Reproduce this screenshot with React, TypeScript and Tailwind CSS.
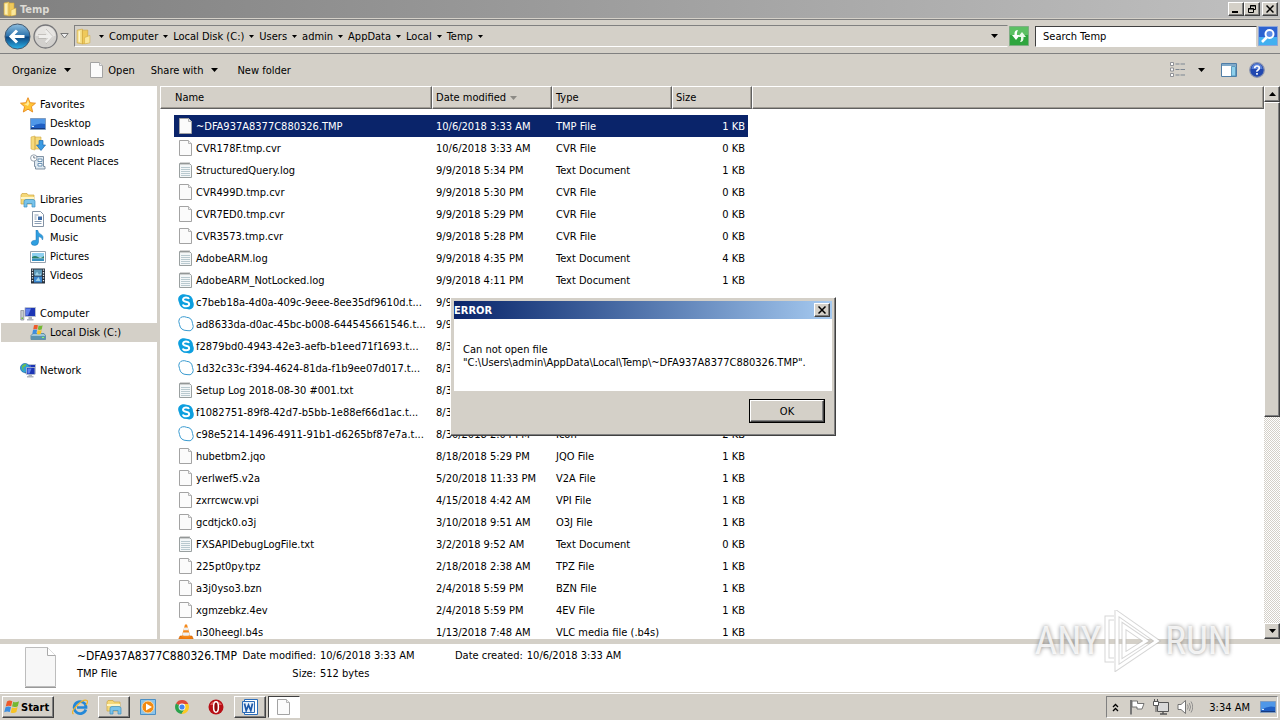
import type { ReactNode } from 'react';

const RAISED =
  'border border-t-white border-l-white border-r-[#404040] border-b-[#404040] bg-[#d4d0c8] shadow-[inset_-1px_-1px_#808080]';

type FileKind = 'blank' | 'text' | 'skype' | 'bubble' | 'vlc';

const files: { name: string; date: string; type?: string; size?: string; kind: FileKind }[] = [
  { name: '~DFA937A8377C880326.TMP', date: '10/6/2018 3:33 AM', type: 'TMP File', size: '1 KB', kind: 'blank' },
  { name: 'CVR178F.tmp.cvr', date: '10/6/2018 3:33 AM', type: 'CVR File', size: '0 KB', kind: 'blank' },
  { name: 'StructuredQuery.log', date: '9/9/2018 5:34 PM', type: 'Text Document', size: '1 KB', kind: 'text' },
  { name: 'CVR499D.tmp.cvr', date: '9/9/2018 5:30 PM', type: 'CVR File', size: '0 KB', kind: 'blank' },
  { name: 'CVR7ED0.tmp.cvr', date: '9/9/2018 5:29 PM', type: 'CVR File', size: '0 KB', kind: 'blank' },
  { name: 'CVR3573.tmp.cvr', date: '9/9/2018 5:28 PM', type: 'CVR File', size: '0 KB', kind: 'blank' },
  { name: 'AdobeARM.log', date: '9/9/2018 4:35 PM', type: 'Text Document', size: '4 KB', kind: 'text' },
  { name: 'AdobeARM_NotLocked.log', date: '9/9/2018 4:11 PM', type: 'Text Document', size: '1 KB', kind: 'text' },
  { name: 'c7beb18a-4d0a-409c-9eee-8ee35df9610d.t...', date: '9/9', kind: 'skype' },
  { name: 'ad8633da-d0ac-45bc-b008-644545661546.t...', date: '9/9', kind: 'bubble' },
  { name: 'f2879bd0-4943-42e3-aefb-b1eed71f1693.t...', date: '8/30', kind: 'skype' },
  { name: '1d32c33c-f394-4624-81da-f1b9ee07d017.t...', date: '8/30', kind: 'bubble' },
  { name: 'Setup Log 2018-08-30 #001.txt', date: '8/30', kind: 'text' },
  { name: 'f1082751-89f8-42d7-b5bb-1e88ef66d1ac.t...', date: '8/30', kind: 'skype' },
  { name: 'c98e5214-1496-4911-91b1-d6265bf87e7a.t...', date: '8/30/2018 2:04 PM', type: 'Icon', size: '2 KB', kind: 'bubble' },
  { name: 'hubetbm2.jqo', date: '8/18/2018 5:29 PM', type: 'JQO File', size: '1 KB', kind: 'blank' },
  { name: 'yerlwef5.v2a', date: '5/20/2018 11:33 PM', type: 'V2A File', size: '1 KB', kind: 'blank' },
  { name: 'zxrrcwcw.vpi', date: '4/15/2018 4:42 AM', type: 'VPI File', size: '1 KB', kind: 'blank' },
  { name: 'gcdtjck0.o3j', date: '3/10/2018 9:51 AM', type: 'O3J File', size: '1 KB', kind: 'blank' },
  { name: 'FXSAPIDebugLogFile.txt', date: '3/2/2018 9:52 AM', type: 'Text Document', size: '0 KB', kind: 'text' },
  { name: '225pt0py.tpz', date: '2/18/2018 2:38 AM', type: 'TPZ File', size: '1 KB', kind: 'blank' },
  { name: 'a3j0yso3.bzn', date: '2/4/2018 5:59 PM', type: 'BZN File', size: '1 KB', kind: 'blank' },
  { name: 'xgmzebkz.4ev', date: '2/4/2018 5:59 PM', type: '4EV File', size: '1 KB', kind: 'blank' },
  { name: 'n30heegl.b4s', date: '1/13/2018 7:48 AM', type: 'VLC media file (.b4s)', size: '1 KB', kind: 'vlc' },
];

const crumbs = ['Computer', 'Local Disk (C:)', 'Users', 'admin', 'AppData', 'Local', 'Temp'];

function Icon({ size = 16, children }: { size?: number; children: ReactNode }) {
  return (
    <svg width={size} height={size} viewBox="0 0 16 16" className="shrink-0" aria-hidden="true">
      {children}
    </svg>
  );
}

function DownArrow() {
  return (
    <svg width="7" height="4" viewBox="0 0 7 4" className="shrink-0" aria-hidden="true">
      <path d="M0 0h7L3.5 4z" fill="#000" />
    </svg>
  );
}

function CrumbArrow() {
  return (
    <svg width="5" height="3" viewBox="0 0 5 3" className="shrink-0" aria-hidden="true">
      <path d="M0 0h5L2.500 3z" fill="#000" />
    </svg>
  );
}

function FolderIcon({ size = 16 }: { size?: number }) {
  return (
    <Icon size={size}>
      <path d="M2 2l5-1v14l-5-1z" fill="#f7e08a" stroke="#d0a63a" strokeWidth=".6" />
      <path d="M7 2h5v12l-5 1z" fill="#efc95a" stroke="#d0a63a" strokeWidth=".6" />
      <path d="M9 9l5-2v7l-5 1z" fill="#fbe79b" stroke="#d0a63a" strokeWidth=".5" />
      <path d="M4 3v10" stroke="#fffbe0" />
    </Icon>
  );
}

function PageIcon() {
  return (
    <Icon>
      <path d="M1.500 .5h9l3 3v12h-12z" fill="#fbfbfb" stroke="#a3a3a3" />
      <path d="M10.500 .5v3h3" fill="#eee" stroke="#b4b4b4" />
    </Icon>
  );
}

function LibraryIcon() {
  return (
    <Icon>
      <path d="M1 3l1-1.500h5L8 3h6v9H1z" fill="#f5d878" stroke="#cfa640" strokeWidth=".7" />
      <path d="M1 5h13v2H1z" fill="#fff5c4" />
      <path d="M4 15V9.500Q4 7.500 6 7.500h7q2 0 2 2V15h-3v-3.500H7V15z" fill="#79c3ea" stroke="#3c8fc4" strokeWidth=".7" />
    </Icon>
  );
}

function DesktopIcon() {
  return (
    <Icon>
      <path d="M.5 2.500h15v11H.5z" fill="#1f5fc4" stroke="#7f9cc0" />
      <path d="M1 3h14v5Q8 6 1 11z" fill="#4f97e8" />
      <path d="M1 12h14v1H1z" fill="#153a80" />
      <path d="M2 10h2v1H2z" fill="#d6e8ff" />
    </Icon>
  );
}

function FileIcon({ kind }: { kind: FileKind }) {
  if (kind === 'blank') return <PageIcon />;
  if (kind === 'text') {
    return (
      <Icon>
        <path d="M1.500 1.500h10l2 2v12h-12z" fill="#f4f7f8" stroke="#9aa0a0" />
        <path d="M3 5.500h9M3 7.500h9M3 9.500h9M3 11.500h9M3 13.500h9" stroke="#a9bcc4" strokeWidth=".8" />
        <path d="M3 0v3M5 0v3M7 0v3M9 0v3M11 0v3" stroke="#888" strokeWidth=".7" />
      </Icon>
    );
  }
  if (kind === 'skype') {
    return (
      <Icon>
        <path d="M4.500.3Q7-.2 8.500.8Q14.500 1 15 7.500Q16.600 10.500 15 13.500Q12.500 16.500 9 15.100Q2 15 1 8.500Q-.7 5 1 2.500Q2.500.5 4.500.3z" fill="#0d9fdf" />
        <path d="M11 5Q10.500 3.500 8 3.500T5 5.500Q5 7.200 8 7.700T11.200 10Q11.200 12.300 8.200 12.300T4.800 10.500" fill="none" stroke="#fff" strokeWidth="1.900" />
      </Icon>
    );
  }
  if (kind === 'bubble') {
    return (
      <Icon>
        <path d="M4.500.8Q7 .4 8.500 1.300Q14 1.500 14.500 7.500Q16 10.500 14.500 13Q12.500 15.700 9 14.600Q2.400 14.500 1.500 8.500Q0 5 1.500 2.800Q2.800 1 4.500.8z" fill="#fff" stroke="#3a9bd0" />
      </Icon>
    );
  }
  return (
    <Icon>
      <path d="M2 12h12l1.500 3.500H.5z" fill="#ef7a0c" stroke="#c35a04" strokeWidth=".5" />
      <path d="M7 .5h2L12.500 13q-4.500 1.500-9 0z" fill="#f58a1c" />
      <path d="M6.200 3.500h3.600l.8 2.800H5.400zM4.900 8.500h6.200l.8 2.700q-4 1-7.800 0z" fill="#eef0f2" />
    </Icon>
  );
}

function MonitorShape() {
  return (
    <>
      <path d="M5 1.500h10.500v9H5z" fill="#1c35b5" stroke="#b9c1cf" />
      <path d="M6 2.500h5L8 9.500H6z" fill="#5f80ee" />
      <path d="M8.500 11h3.500v2h1.500v1.500H7V13h1.500z" fill="#aeb4bd" />
    </>
  );
}

function WindowsFlag({ size = 16 }: { size?: number }) {
  return (
    <Icon size={size}>
      <path d="M3 2.500Q5.500.8 8.300 2.300L7.200 7.200Q4.500 6 1.700 7.500z" fill="#ee5a2a" />
      <path d="M9.200 2.700Q12 3.900 15 2.300L13.800 7.200Q11 8.700 8.100 7.600z" fill="#74b832" />
      <path d="M1.500 8.300Q4.300 6.900 7 8.100L5.800 13Q3 11.700.2 13.300z" fill="#3c8ee0" />
      <path d="M7.900 8.500Q10.700 9.600 13.600 8.100L12.400 13Q9.600 14.600 6.700 13.400z" fill="#f7c325" />
    </Icon>
  );
}

const places: { title: string; icon: ReactNode; items: { label: string; icon: ReactNode; active?: boolean }[] }[] = [
  {
    title: 'Favorites',
    icon: (
      <Icon>
        <path d="M8 .7l2.100 5 5.400.5-4.100 3.500 1.300 5.300L8 12.200 3.300 15l1.300-5.300L.5 6.200l5.400-.5z" fill="#ffc536" stroke="#e8891c" strokeWidth=".9" />
        <path d="M8 3l1.200 3.500L8 9 4 7l2.700-.5z" fill="#ffeb9c" />
      </Icon>
    ),
    items: [
      { label: 'Desktop', icon: <DesktopIcon /> },
      {
        label: 'Downloads',
        icon: (
          <Icon>
            <path d="M1 2l4-1v14l-4-1zM5 2h6v12H5z" fill="#f6da7c" stroke="#d2aa45" strokeWidth=".6" />
            <path d="M9 5.500h4V10h2.500L11 15.500 6.500 10H9z" fill="#3b9be4" stroke="#1d68ae" strokeWidth=".7" />
          </Icon>
        ),
      },
      {
        label: 'Recent Places',
        icon: (
          <Icon>
            <path d="M4.500 2.500h9v10H15v2.500H5.500V12.500h-1z" fill="#dfe9f1" stroke="#75889b" strokeWidth=".9" />
            <path d="M8 5h4v2.500H8zM8 9.500h4V12H8z" fill="#fff" stroke="#5f89ad" strokeWidth=".9" />
            <circle cx="3.800" cy="4" r="3.200" fill="#fff" stroke="#8b97a5" strokeWidth=".9" />
            <path d="M3.800 2v2h1.700" fill="none" stroke="#4c5d70" strokeWidth=".8" />
          </Icon>
        ),
      },
    ],
  },
  {
    title: 'Libraries',
    icon: <LibraryIcon />,
    items: [
      {
        label: 'Documents',
        icon: (
          <Icon>
            <path d="M2.500 .5h8l3 3v12h-11z" fill="#fff" stroke="#8493a5" />
            <path d="M4.500 4h4M4.500 6h2M4.500 8h2M4.500 10.500h7M4.500 12.500h7" stroke="#7d93ad" strokeWidth=".9" />
            <path d="M8 5.500h4V9H8z" fill="#3a6ba8" />
          </Icon>
        ),
      },
      {
        label: 'Music',
        icon: (
          <Icon>
            <path d="M7.500 0q.5 3 3.500 4.500T12.500 10q-.3-3-4-3.500V12q-.2 3.200-3.700 3.500Q1.300 15.500 1.200 13q.2-2.800 4.800-2.700V0z" fill="#2f9fe0" stroke="#1a72b4" strokeWidth=".5" />
          </Icon>
        ),
      },
      {
        label: 'Pictures',
        icon: (
          <Icon>
            <path d="M.5 2.500h15v11H.5z" fill="#fff" stroke="#96a2ae" />
            <path d="M2 4h12v4H2z" fill="#8ed0f0" />
            <path d="M2 8q3-2 6 0t6-1v2.500H2z" fill="#2a8068" />
            <path d="M2 9.500h12V12H2z" fill="#3690c0" />
          </Icon>
        ),
      },
      {
        label: 'Videos',
        icon: (
          <Icon>
            <path d="M1 .5h14v15H1z" fill="#26303c" />
            <path d="M4 1.500h8v6H4z" fill="#5d99b8" />
            <path d="M4 8.500h8v6H4z" fill="#3a86d0" />
            <path d="M5 7q2-5 3-2t3 0v2.500H5zM5.500 13l3-4 2 4z" fill="#9fd2e8" />
            <path d="M2.500 1.500v13M13.500 1.500v13" stroke="#e9eef2" strokeWidth="1.300" strokeDasharray="1.300 1.300" />
          </Icon>
        ),
      },
    ],
  },
  {
    title: 'Computer',
    icon: (
      <Icon>
        <MonitorShape />
        <path d="M.8 4.500h3V14h-3z" fill="#c6cbd0" stroke="#7d848c" strokeWidth=".7" />
        <path d="M1.500 11.500h1.500V13H1.500z" fill="#6cbb3c" />
      </Icon>
    ),
    items: [
      {
        label: 'Local Disk (C:)',
        active: true,
        icon: (
          <Icon>
            <path d="M1 10.500L3 8.500h11l1.500 2v4H1z" fill="#9fc5d8" stroke="#4f7f97" strokeWidth=".8" />
            <path d="M1 11h14.500v3.500H1z" fill="#5c93ae" />
            <path d="M12 12h2v1h-2z" fill="#8aff6a" />
            <path d="M4 .3Q6-.5 7.900.3L7.200 4.400Q5 3.600 3.200 4.400z" fill="#ee5a2a" />
            <path d="M8.600.5q2 .8 4-.2L11.700 4.500q-2 .9-3.900.1z" fill="#74b832" />
            <path d="M3 5q2-.9 4 0L6.300 9q-2-.9-4 0z" fill="#3c8ee0" />
            <path d="M7.700 5.200q2 .8 4-.2L10.800 9q-2 .9-3.900.1z" fill="#f7c325" />
          </Icon>
        ),
      },
    ],
  },
  {
    title: 'Network',
    icon: (
      <Icon>
        <MonitorShape />
        <circle cx="5" cy="5" r="4.600" fill="#2fa0d8" stroke="#19679c" strokeWidth=".6" />
        <path d="M2 3q2-2.500 4.500-2Q6 3.500 4 4T4.500 8Q1.500 7 2 3z" fill="#6cc04c" />
        <path d="M6.500 4.500H15v7H6.500z" fill="#1c35b5" stroke="#b9c1cf" strokeWidth=".8" />
        <path d="M7.500 5.500h4l-2 5h-2z" fill="#5f80ee" />
      </Icon>
    ),
    items: [],
  },
];

function TitleBar() {
  const caption = `flex h-[14px] w-4 items-center justify-center ${RAISED}`;
  return (
    <header className="flex h-[18px] shrink-0 items-center bg-linear-to-r from-[#808080] to-[#c0c0c0] px-[2px]">
      <FolderIcon />
      <h1 className="ml-[2px] flex-1 font-bold text-[#dcdad4]">Temp</h1>
      <button className={caption} aria-label="Minimize">
        <svg width="8" height="8" viewBox="0 0 8 8"><path d="M0 6h6v2H0z" /></svg>
      </button>
      <button className={caption} aria-label="Restore">
        <svg width="8" height="8" viewBox="0 0 8 8" fill="none" stroke="#000">
          <path d="M2.500 3V.5h5v4H6M2 1h6" />
          <path d="M.5 3.500h5v4h-5zM0 4h6" />
        </svg>
      </button>
      <button className={`ml-[2px] ${caption}`} aria-label="Close">
        <svg width="8" height="8" viewBox="0 0 8 8" stroke="#000" strokeWidth="1.500"><path d="M.5.5l7 7M7.500.5l-7 7" /></svg>
      </button>
    </header>
  );
}

function AddressBar() {
  return (
    <nav className="flex h-9 shrink-0 items-center border-b border-b-[#808080] bg-[#d4d0c8] px-[2px] pt-px shadow-[inset_0_1px_#d4d0c8,inset_0_2px_#808080,0_1px_#fff]" aria-label="Location">
      <button aria-label="Back" className="ml-[2px]">
        <svg width="27" height="27" viewBox="0 0 27 27">
          <defs>
            <linearGradient id="back" x1="0" y1="0" x2="0" y2="1">
              <stop offset="0" stopColor="#8fbfe0" />
              <stop offset=".48" stopColor="#2c72ac" />
              <stop offset=".52" stopColor="#0d4580" />
              <stop offset="1" stopColor="#2db4ea" />
            </linearGradient>
          </defs>
          <circle cx="13.500" cy="13.500" r="12.500" fill="url(#back)" stroke="#43586e" />
          <path d="M13 7.500l-6 6 6 6M7.500 13.500h13" fill="none" stroke="#fff" strokeWidth="3" />
        </svg>
      </button>
      <button aria-label="Forward" className="ml-[2px]">
        <svg width="25" height="25" viewBox="0 0 25 25">
          <circle cx="12.500" cy="12.500" r="11.500" fill="#d2d0cd" stroke="#77777a" strokeWidth="1.300" />
          <path d="M2.500 12a10 10 0 0 1 20 0z" fill="#e6e4e1" />
          <path d="M13 6.500l6 6-6 6M18 12.500H6" fill="none" stroke="#efeeec" strokeWidth="3" />
          <path d="M13 5l7 7.500-7 7.500M5 10.500h8M5 14.500h8" fill="none" stroke="#b4b2ae" strokeWidth=".7" />
        </svg>
      </button>
      <button aria-label="Recent locations" className="ml-[2px]">
        <svg width="9" height="6" viewBox="0 0 9 6"><path d="M.8.5h7.400L4.500 5z" fill="#eee" stroke="#777" /></svg>
      </button>
      <div className="ml-[5px] flex h-[22px] min-w-0 flex-1 items-center border border-t-[#808080] border-r-[#d4d0c8] border-b-white border-l-[#808080]">
        <FolderIcon size={17} />
        <ol className="ml-[7px] flex items-center gap-[5px]">
          <li className="flex"><CrumbArrow /></li>
          {crumbs.map((crumb) => (
            <li key={crumb} className="flex items-center gap-[5px]">
              <button>{crumb}</button>
              <CrumbArrow />
            </li>
          ))}
        </ol>
        <button className="mr-[9px] ml-auto" aria-label="Previous locations"><DownArrow /></button>
      </div>
      <button aria-label="Refresh" className="ml-px">
        <svg width="20" height="20" viewBox="0 0 20 20">
          <path d="M.5.5h19v19H.5z" fill="#2fa53e" stroke="#7fae84" />
          <path d="M1 1h18v8H1z" fill="#5cc063" />
          <path d="M9 4Q5 4 5.500 9H3l4 5 4-5H8Q7.500 6.500 9 4z" fill="#fff" />
          <path d="M11 16q4 0 3.500-5H17l-4-5-4 5h3q.5 2.500-1 5z" fill="#eafbea" />
        </svg>
      </button>
      <input
        type="search"
        aria-label="Search Temp"
        placeholder="Search Temp"
        className="ml-[6px] h-[21px] w-[222px] border border-t-[#404040] border-r-[#d4d0c8] border-b-white border-l-[#404040] bg-white px-[7px] outline-none placeholder:text-black"
      />
      <button aria-label="Search" className="ml-px">
        <svg width="20" height="20" viewBox="0 0 20 20">
          <path d="M.5.5h19v19H.5z" fill="#2c62d0" stroke="#8ea6d8" />
          <path d="M1 11h18v8H1z" fill="#43b0f0" />
          <circle cx="11.500" cy="8" r="4" fill="#5b8be6" stroke="#fff" strokeWidth="2" />
          <path d="M8.500 11.500L4 16" stroke="#fff" strokeWidth="2.600" />
        </svg>
      </button>
    </nav>
  );
}

function Toolbar() {
  return (
    <div className="flex h-8 shrink-0 items-center bg-[#d4d0c8] pr-[15px] pl-3" role="toolbar">
      <button className="flex items-center gap-2">Organize <DownArrow /></button>
      <button className="ml-[18px] flex items-center gap-[3px]"><PageIcon /> Open</button>
      <button className="ml-4 flex items-center gap-2">Share with <DownArrow /></button>
      <button className="ml-[19px]">New folder</button>
      <button className="ml-auto flex items-center gap-3" aria-label="Change your view">
        <Icon>
          <path d="M.5.500h3v3h-3zM.5 6h3v3h-3zM.5 11.500h3v3h-3z" fill="#fff" stroke="#85878c" strokeWidth=".9" />
          <path d="M5.500 2h4M10.500 2h4.500M5.500 7.500h4M10.500 7.500h4.500M5.500 13h4M10.500 13h4.500" stroke="#7d8792" />
        </Icon>
        <DownArrow />
      </button>
      <button className="ml-4" aria-label="Preview pane">
        <Icon>
          <path d="M.5 1.500h15v13H.5z" fill="#fff" stroke="#4f7da6" />
          <path d="M1 2h14v2H1z" fill="#7fa9c9" />
          <path d="M10.500 4.500h4V14h-4z" fill="#8ed0ec" stroke="#4588b0" strokeWidth=".8" />
        </Icon>
      </button>
      <button className="ml-3" aria-label="Help">
        <svg width="16" height="16" viewBox="0 0 16 16">
          <circle cx="8" cy="8" r="7.300" fill="#2148b0" stroke="#8a94b0" strokeWidth="1.200" />
          <path d="M2.500 7a5.500 5.500 0 0 1 11 0z" fill="#5a80d8" />
          <path d="M5.700 6.200Q5.700 4 8 4t2.300 2Q10.300 7.200 9 8T8 9.800M8 11v1.700" fill="none" stroke="#fff" strokeWidth="1.700" />
        </svg>
      </button>
    </div>
  );
}

function Sidebar() {
  return (
    <aside className="w-40 shrink-0 overflow-hidden border-r-3 border-[#d4d0c8] bg-white pt-[9px]">
      {places.map((group) => (
        <section key={group.title} className="mb-[19px]">
          <h2 className="flex h-[19px] items-center gap-1 pl-5">{group.icon}{group.title}</h2>
          <ul>
            {group.items.map((item) => (
              <li key={item.label} className={`ml-px flex h-[19px] items-center gap-1 pl-[29px] ${item.active ? 'bg-[#d4d0c8]' : ''}`}>
                {item.icon}
                {item.label}
              </li>
            ))}
          </ul>
        </section>
      ))}
    </aside>
  );
}

function FileTable() {
  const th = 'border border-t-white border-l-white border-r-[#606060] border-b-[#606060] bg-[#d4d0c8] px-[3px] text-left font-normal shadow-[inset_-1px_-1px_#a09c94]';
  return (
    <div className="min-w-0 flex-1 overflow-hidden">
      <table className="w-full table-fixed border-separate border-spacing-0">
        <colgroup>
          <col className="w-[14px]" />
          <col className="w-[258px]" />
          <col className="w-[120px]" />
          <col className="w-[120px]" />
          <col className="w-[76px]" />
          <col className="w-[4px]" />
          <col />
        </colgroup>
        <thead>
          <tr className="h-[23px]">
            <th colSpan={2} className={`${th} pl-[14px]`}>Name</th>
            <th className={th}>
              <span className="flex items-center gap-1">
                Date modified
                <svg width="7" height="4" viewBox="0 0 7 4"><path d="M0 0h7L3.500 4z" fill="#8c8a85" /></svg>
              </span>
            </th>
            <th className={th}>Type</th>
            <th colSpan={2} className={th}>Size</th>
            <td className={th} />
          </tr>
        </thead>
        <tbody className="before:block before:h-[6px]">
          {files.map((file, i) => {
            const bg = i === 0 ? 'bg-[#0a246a] text-white' : '';
            return (
              <tr key={file.name} className="h-[22px] whitespace-nowrap">
                <td />
                <td className={bg}>
                  <span className="flex items-center gap-[2px] pl-1"><FileIcon kind={file.kind} />{file.name}</span>
                </td>
                <td className={`pl-1 ${bg}`}>{file.date}</td>
                <td className={`pl-1 ${bg}`}>{file.type}</td>
                <td className={`pr-[3px] text-right ${bg}`}>{file.size}</td>
              </tr>
            );
          })}
        </tbody>
      </table>
    </div>
  );
}

function ScrollBar() {
  const button = `flex h-4 w-4 shrink-0 items-center justify-center ${RAISED}`;
  return (
    <div className="flex w-4 shrink-0 flex-col bg-[repeating-conic-gradient(#fff_0_25%,#d4d0c8_0_50%)] bg-[length:2px_2px]">
      <button className={button} aria-label="Scroll up">
        <svg width="7" height="4" viewBox="0 0 7 4"><path d="M0 4h7L3.500 0z" /></svg>
      </button>
      <div className={`h-[57%] ${RAISED}`} />
      <button className={`mt-auto ${button}`} aria-label="Scroll down"><DownArrow /></button>
    </div>
  );
}

function DetailsPane() {
  return (
    <footer className="flex h-[54px] shrink-0 items-start border-t-5 border-[#d4d0c8] bg-white pt-[3px] pl-6">
      <svg width="33" height="41" viewBox="0 0 33 41" className="shrink-0" aria-hidden="true">
        <path d="M1.500.5h22l8 8v31h-30z" fill="#f7f7f7" stroke="#bdbdbd" />
        <path d="M23.500.5v8h8" fill="#fff" stroke="#aaa" />
        <path d="M1 40.500h31" stroke="#999" />
      </svg>
      <div className="ml-5 w-[165px] leading-[18px] whitespace-nowrap">
        <p className="text-[12px] leading-[18px]">~DFA937A8377C880326.TMP</p>
        <p>TMP File</p>
      </div>
      <dl className="grid grid-cols-[74px_132px] gap-x-1 leading-[18px] whitespace-nowrap">
        <dt className="text-right">Date modified:</dt>
        <dd>10/6/2018 3:33 AM</dd>
        <dt className="text-right">Size:</dt>
        <dd>512 bytes</dd>
      </dl>
      <dl className="ml-[3px] flex gap-1 leading-[18px] whitespace-nowrap">
        <dt>Date created:</dt>
        <dd>10/6/2018 3:33 AM</dd>
      </dl>
    </footer>
  );
}

function Taskbar() {
  const app = 'flex h-[22px] w-8 items-center justify-center';
  return (
    <div className="flex h-[27px] shrink-0 items-center border-t border-white bg-[#d4d0c8] px-[2px] shadow-[0_-1px_#d4d0c8]">
      <button className={`flex h-[22px] w-[52px] items-center gap-px pl-px font-bold ${RAISED}`}>
        <WindowsFlag />Start
      </button>
      <div className="ml-[10px] flex items-center gap-[2px]">
        <button className={app} aria-label="Internet Explorer">
          <Icon>
            <path d="M13.800 10.500A6 6 0 1 1 14 7.500v1H5" fill="none" stroke="#2488d8" strokeWidth="2.700" />
            <path d="M1.500 15Q-1.500 13 5 6.500T15 1.500q1.500 1.500-1 4.500" fill="none" stroke="#f0b429" strokeWidth="1.200" />
          </Icon>
        </button>
        <button className={`${app} ${RAISED}`} aria-label="Windows Explorer"><LibraryIcon /></button>
        <button className={app} aria-label="Windows Media Player">
          <Icon>
            <path d="M.5.500h15v15H.5z" fill="#8cc4ea" stroke="#4b8fc4" />
            <circle cx="8" cy="8" r="6" fill="#f28a12" stroke="#fbd9a8" />
            <path d="M6 4.500l6 3.500-6 3.500z" fill="#fff" />
          </Icon>
        </button>
        <button className={app} aria-label="Google Chrome">
          <Icon>
            <path d="M8 8L2 4.500A7 7 0 0 1 14.300 5H8z" fill="#de4a3a" />
            <path d="M8 8L2 4.500A7 7 0 0 0 7.500 15L11 9.500z" fill="#2ba24c" />
            <path d="M8 5h6.300A7 7 0 0 1 7.500 15L11 9.500z" fill="#fbc924" />
            <circle cx="8" cy="8" r="3.400" fill="#fff" />
            <circle cx="8" cy="8" r="2.600" fill="#4486f0" />
          </Icon>
        </button>
        <button className={app} aria-label="Opera">
          <Icon>
            <circle cx="8" cy="8" r="7.500" fill="#b80f16" />
            <path d="M2 6a6.500 5.500 0 0 1 12 0z" fill="#e2575a" />
            <ellipse cx="8" cy="8" rx="2.400" ry="5.200" fill="#8f070c" stroke="#fff" strokeWidth="1.500" />
          </Icon>
        </button>
        <button className={`${app} ${RAISED}`} aria-label="Microsoft Word">
          <Icon>
            <path d="M2.500.5h13v15h-13z" fill="#fff" stroke="#2b6cb8" />
            <path d="M.5 2.500h12v11H.5z" fill="#e6f0fb" stroke="#2b6cb8" />
            <path d="M2.500 4.500l1.700 7L6.500 6l2.300 5.500 1.700-7" fill="none" stroke="#1c58a8" strokeWidth="1.700" />
          </Icon>
        </button>
        <button className="flex h-[22px] w-8 items-center justify-center border border-t-[#404040] border-r-white border-b-white border-l-[#404040] bg-white" aria-label="Error dialog">
          <PageIcon />
        </button>
      </div>
      <div className="ml-auto flex h-[22px] items-center border border-t-[#808080] border-r-white border-b-white border-l-[#808080] pr-px pl-[5px]">
        <button aria-label="Show hidden icons">
          <svg width="7" height="9" viewBox="0 0 7 9" fill="none" stroke="#000" strokeWidth="1.300"><path d="M1 4l2.500-2.500L6 4M1 8l2.500-2.500L6 8" /></svg>
        </button>
        <div className="ml-[10px] flex gap-2">
          <Icon>
            <path d="M2 1v14.500" stroke="#777" strokeWidth="2" />
            <path d="M3 2h5.500v2.500H15L13 10H8V8H3z" fill="#fff" stroke="#666" strokeWidth=".9" />
          </Icon>
          <Icon>
            <path d="M4.500 3.500h11v9h-11z" fill="#d9d9d9" stroke="#555" />
            <path d="M7 15h7M10 12.500V15" stroke="#555" strokeWidth="1.400" />
            <path d="M.5 2.500h5v4h-5zM1.500 0v2.500M4.500 0v2.500M3 6.500V13" fill="#fff" stroke="#555" />
          </Icon>
          <Icon>
            <path d="M1 5.500h3L8.500 1.500v13L4 10.500H1z" fill="#fff" stroke="#666" strokeWidth=".9" />
            <path d="M10.500 5.500q1.500 2.500 0 5M12.300 4q2.500 4 0 8M14 2.500q3.500 5.500 0 11" fill="none" stroke="#888" strokeWidth=".9" />
          </Icon>
        </div>
        <time className="mr-[10px] ml-4">3:34 AM</time>
        <DesktopIcon />
      </div>
    </div>
  );
}

function ErrorDialog() {
  return (
    <div role="alertdialog" aria-labelledby="error-title" className={`absolute top-[297px] left-[450px] w-[386px] p-[3px] ${RAISED}`}>
      <div className="flex h-[18px] items-center bg-linear-to-r from-[#0a246a] to-[#a6caf0] pr-[2px]">
        <h2 id="error-title" className="flex-1 font-bold text-white">ERROR</h2>
        <button className={`flex h-[14px] w-4 items-center justify-center ${RAISED}`} aria-label="Close dialog">
          <svg width="8" height="8" viewBox="0 0 8 8" stroke="#000" strokeWidth="1.500"><path d="M.5.5l7 7M7.500.5l-7 7" /></svg>
        </button>
      </div>
      <p className="h-[72px] bg-white pt-6 pl-[9px] leading-[13px] whitespace-nowrap">
        Can not open file<br />
        "C:\Users\admin\AppData\Local\Temp\~DFA937A8377C880326.TMP".
      </p>
      <div className="flex justify-end pt-2 pr-[7px] pb-[9px]">
        <button className="h-6 w-[76px] border border-black p-0">
          <span className={`flex h-full items-center justify-center ${RAISED}`}>OK</span>
        </button>
      </div>
    </div>
  );
}

function Watermark() {
  return (
    <div className="pointer-events-none absolute right-12 bottom-12 flex h-[62px] items-center gap-[3px] font-['Roboto_Condensed','Liberation_Sans_Narrow','Liberation_Sans',sans-serif] text-[39px] text-white/80 [text-shadow:0_0_4px_#888]">
      <span>ANY</span>
      <svg width="58" height="62" viewBox="0 0 58 62" fill="none" aria-hidden="true">
        <path d="M10 50H3V8h7M13 3v55L53 31zM20 16v29l22-14z" stroke="#bbb" strokeWidth="5" opacity=".6" />
        <path d="M10 50H3V8h7M13 3v55L53 31zM20 16v29l22-14z" stroke="#fff" strokeWidth="3" />
      </svg>
      <span>RUN</span>
    </div>
  );
}

export default function App() {
  return (
    <div className="relative flex h-screen flex-col overflow-hidden bg-white font-['Tahoma','DejaVu_Sans_Condensed','Noto_Sans',sans-serif] text-[11px] leading-[15px] text-black">
      <TitleBar />
      <AddressBar />
      <Toolbar />
      <main className="flex min-h-0 flex-1">
        <Sidebar />
        <FileTable />
        <ScrollBar />
      </main>
      <DetailsPane />
      <Taskbar />
      <Watermark />
      <ErrorDialog />
    </div>
  );
}
